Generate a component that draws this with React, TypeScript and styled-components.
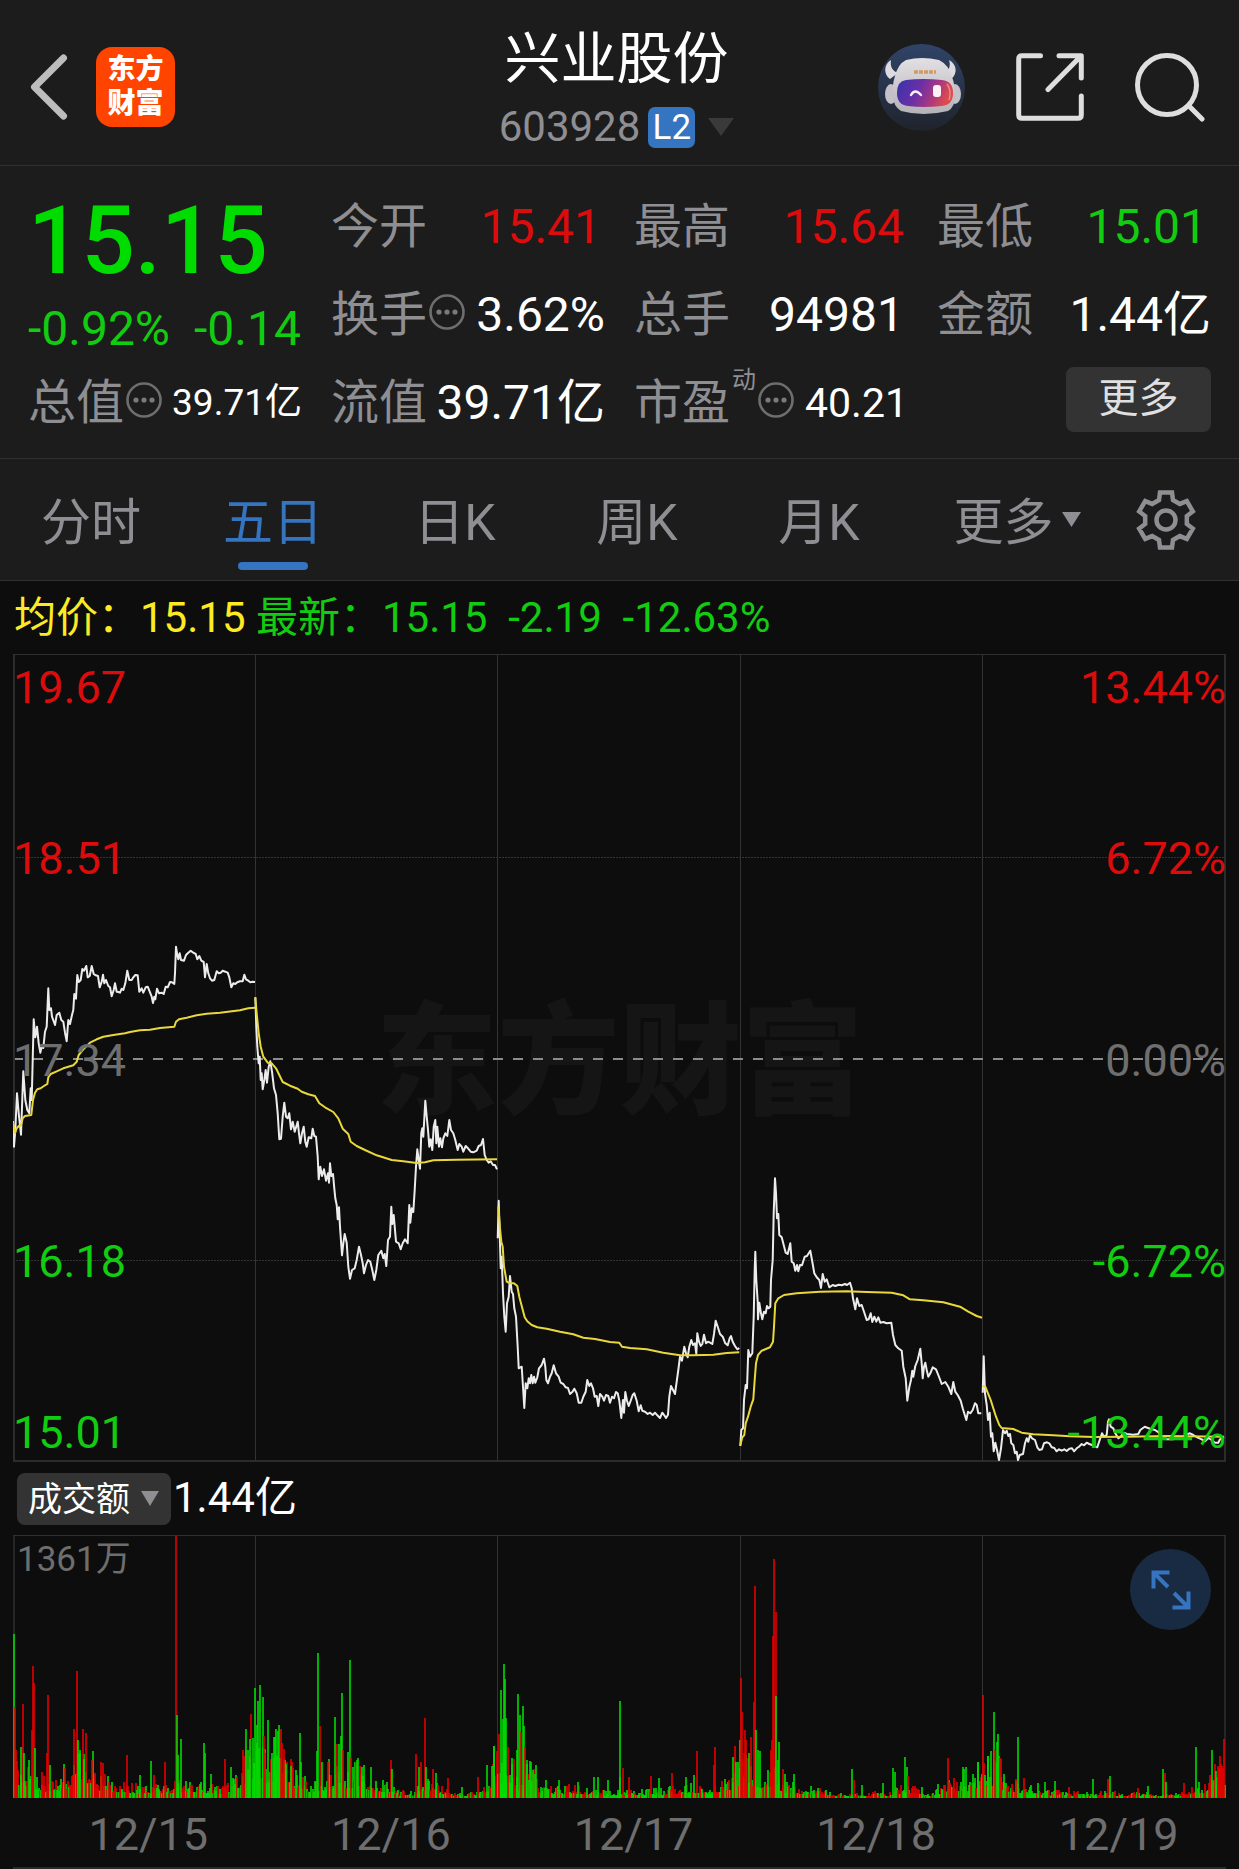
import React from "react";
import styled, { createGlobalStyle } from "styled-components";

const color = {
  page: "#0d0d0d",
  panel: "#1c1c1c",
  chip: "#333333",
  line: "#303030",
  label: "#8e8e93",
  dim: "#6e6e6e",
  text: "#ffffff",
  up: "#dc0c0c",
  down: "#12cc12",
  price: "#00dc00",
  average: "#fdea22",
  blue: "#3474c0",
  brand: "#ff4400",
};

type Tone = "up" | "down" | "text" | "average" | "dim";

const GlobalStyle = createGlobalStyle`
  * { box-sizing: border-box; }
  body {
    margin: 0;
    background: ${color.page};
    color: ${color.text};
    font-family: Roboto, "Noto Sans CJK SC", sans-serif;
  }
  button, select { font: inherit; color: inherit; border: 0; padding: 0; background: none; }
  dl, dd, dt, h1, p { margin: 0; font-weight: 400; }
  svg { display: block; }
`;

/* ---------- header ---------- */

const Header = styled.header`
  display: grid;
  grid-template-columns: 1fr auto 1fr;
  align-items: center;
  padding: 26px 34px 17px 28px;
  background: ${color.panel};
  border-bottom: 1px solid ${color.line};
`;

const HeaderSide = styled.div<{ $end?: boolean }>`
  display: flex;
  align-items: center;
  justify-content: ${(p) => (p.$end ? "flex-end" : "flex-start")};
  gap: ${(p) => (p.$end ? 51 : 28)}px;
`;

const IconButton = styled.button`
  flex: none;
  cursor: pointer;
`;

const Logo = styled.a`
  display: grid;
  place-content: center;
  width: 79px;
  height: 80px;
  border-radius: 16px;
  background: ${color.brand};
  color: #fff;
  font-size: 28px;
  font-weight: 900;
  line-height: 34px;
  text-align: center;
  text-decoration: none;
`;

const Title = styled.h1`
  font-size: 56px;
  line-height: 66px;
  text-align: center;
`;

const CodeRow = styled.div`
  display: flex;
  align-items: center;
  justify-content: center;
  gap: 8px;
  height: 42px;
  margin-top: 14px;
  font-size: 42px;
  line-height: 42px;
  color: ${color.label};
`;

const LevelBadge = styled.span`
  width: 47px;
  border-radius: 7px;
  background: ${color.blue};
  color: #fff;
  font-size: 35px;
  line-height: 41px;
  text-align: center;
`;

const CodeArrow = styled.button`
  && { padding: 0 0 0 5px; }
`;

/* ---------- quote ---------- */

const Quote = styled.section`
  display: grid;
  grid-template-columns: repeat(4, 1fr);
  grid-auto-rows: 88px;
  column-gap: 29px;
  padding: 17px 28px 11px;
  background: ${color.panel};
  border-bottom: 1px solid ${color.line};
`;

const PriceBlock = styled.div`
  grid-row: span 2;
  color: ${color.down};
  white-space: nowrap;
`;

const Price = styled.p`
  font-size: 94px;
  font-weight: 500;
  line-height: 116px;
  color: ${color.price};
`;

const Change = styled.p`
  display: flex;
  gap: 24px;
  font-size: 48px;
  line-height: 60px;
`;

const Stat = styled.dl`
  display: flex;
  align-items: center;
  gap: 2px;
  white-space: nowrap;
  line-height: 88px;
`;

const StatName = styled.dt`
  display: flex;
  align-items: center;
  gap: 2px;
  font-size: 48px;
  color: ${color.label};
`;

const StatSup = styled.sup`
  align-self: flex-start;
  font-size: 24px;
  line-height: 42px;
`;

const InfoButton = styled.button`
  margin-bottom: 6px;
`;

const StatValue = styled.dd<{ $tone: Tone; $size?: number; $inset?: boolean }>`
  && { margin-left: auto; }
  padding-right: ${(p) => (p.$inset ? 4 : 0)}px;
  font-size: ${(p) => p.$size ?? 48}px;
  color: ${(p) => color[p.$tone]};
`;

const MoreButton = styled.button`
  && {
    grid-column: 4;
    align-self: center;
    justify-self: end;
    width: 145px;
    margin-bottom: 8px;
    padding-bottom: 2px;
    border-radius: 8px;
    background: ${color.chip};
    color: #e0e0e0;
    font-size: 40px;
    line-height: 63px;
  }
`;

/* ---------- tabs ---------- */

const Tabs = styled.nav`
  display: grid;
  grid-template-columns: repeat(6, 182fr) 147fr;
  height: 122px;
  background: ${color.panel};
  border-bottom: 1px solid ${color.line};
`;

const Tab = styled.button<{ $active?: boolean; $menu?: boolean }>`
  && {
    display: flex;
    flex-direction: ${(p) => (p.$menu ? "row" : "column")};
    align-items: ${(p) => (p.$menu ? "flex-start" : "center")};
    justify-content: ${(p) => (p.$menu ? "center" : "flex-start")};
    gap: 8px;
    padding: ${(p) => (p.$menu ? "33px 0 0 32px" : "33px 0 0")};
    font-size: 50px;
    line-height: 62px;
    white-space: nowrap;
    color: ${(p) => (p.$active ? color.blue : color.label)};
  }
`;

const TabArrow = styled.span`
  margin-top: 20px;
`;

const Underline = styled.span`
  width: 70px;
  height: 8px;
  border-radius: 4px;
  background: ${color.blue};
`;

const GearButton = styled.button`
  display: grid;
  place-items: center;
`;

/* ---------- charts ---------- */

const Legend = styled.p`
  padding-left: 14px;
  font-size: 42px;
  line-height: 73px;
  white-space: pre;
`;

const Tinted = styled.span<{ $tone: Tone }>`
  color: ${(p) => color[p.$tone]};
`;

const ChartFrame = styled.div`
  position: relative;
  margin: 0 13px;
  border-top: 1px solid ${color.line};
`;

const Watermark = styled.div`
  position: absolute;
  inset: 0;
  display: grid;
  place-items: center;
  padding-bottom: 16px;
  font-size: 122px;
  font-weight: 900;
  color: #151515;
`;

const PriceSvg = styled.svg`
  position: relative;
  width: 100%;
  height: 807px;
`;

const VolumeSvg = styled.svg`
  width: 100%;
  height: 262px;
`;

const Scale = styled.div<{ $end?: boolean }>`
  position: absolute;
  inset: 0;
  display: grid;
  grid-template-rows: 1fr 2fr 2fr 2fr 1fr;
  align-items: center;
  font-size: 45px;
  line-height: 58px;
  text-align: ${(p) => (p.$end ? "right" : "left")};
`;

const ScaleText = styled.span<{ $tone: Tone; $edge?: "first" | "last" }>`
  align-self: ${(p) => (p.$edge === "first" ? "start" : p.$edge === "last" ? "end" : "center")};
  padding-top: 4px;
  color: ${(p) => color[p.$tone]};
`;

const VolumeBar = styled.div`
  display: flex;
  align-items: center;
  gap: 2px;
  height: 73px;
  padding-left: 17px;
  font-size: 42px;
  line-height: 72px;
`;

const VolumeValue = styled.span`
  height: 73px;
`;

const SelectWrap = styled.label`
  display: flex;
  align-items: center;
  width: 154px;
  height: 52px;
  padding-left: 11px;
  gap: 11px;
  border-radius: 8px;
  background: ${color.chip};
`;

const Select = styled.select`
  && {
    appearance: none;
    width: 102px;
    font-size: 34px;
    line-height: 52px;
    outline: none;
  }
`;

const VolumeMax = styled.span`
  position: absolute;
  top: 0;
  left: 4px;
  font-size: 35px;
  line-height: 48px;
  color: ${color.dim};
`;

const ExpandButton = styled.button`
  && {
    position: absolute;
    top: 13px;
    right: 15px;
    display: grid;
    place-items: center;
    width: 81px;
    height: 81px;
    border-radius: 50%;
    background: #182b42;
  }
`;

const Dates = styled.div`
  display: grid;
  grid-template-columns: repeat(5, 1fr);
  margin: 0 13px;
  border-bottom: 2px solid #2a2829;
  font-size: 45px;
  text-align: center;
  color: ${color.dim};
`;

const DateText = styled.time`
  padding: 5px 0 0 28px;
  line-height: 64px;
`;

/* ---------- series ----------
   Samples are integers, three units to a pixel, counted from the day's origin. */

type Day = { origin: [number, number]; price: string; average: string };

const DAYS: Day[] = [
  {
    origin: [-13, 245],
    price:
      "39,663 42,740 46,690 51,580 56,640 63,704 70,514 76,600 82,630 88,640 92,565 95,600 98,480 101,358 106,412 111,380 116,430 121,458 126,435 130,444 135,395 140,380 145,265 148,330 153,325 156,350 165,375 170,345 178,338 184,360 190,365 195,398 200,424 205,360 210,372 216,345 220,330 223,282 228,296 232,225 236,246 242,240 247,207 252,212 259,198 263,232 269,228 275,198 281,222 287,226 294,228 299,262 305,245 309,224 313,250 318,240 325,258 330,262 335,289 341,270 345,250 350,275 355,276 360,278 365,266 370,270 376,250 382,212 388,240 395,240 400,232 406,225 413,226 418,275 425,265 430,278 437,262 443,260 449,275 455,290 459,309 463,290 466,298 471,266 477,280 485,278 491,282 497,260 503,262 510,246 516,247 523,252 525,220 528,140 531,160 535,178 539,160 543,180 552,182 558,165 565,158 572,152 580,158 587,162 592,178 598,168 604,182 611,186 615,232 620,192 625,220 630,235 636,242 643,240 650,214 656,220 662,218 668,212 676,215 683,218 688,232 694,262 700,250 706,252 712,247 720,244 728,244 733,224 738,238 745,242 751,247 758,245 765,246",
    average:
      "39,668 45,700 50,685 56,678 63,676 68,655 75,648 94,645 99,600 105,578 112,568 122,565 135,556 142,552 145,532 152,522 170,514 190,505 220,496 230,485 236,465 250,448 270,428 290,418 310,410 340,405 375,400 390,396 420,391 450,389 480,384 523,380 528,365 537,358 560,353 590,346 620,341 660,338 720,331 745,325 765,323",
  },
  {
    origin: [-13, 245],
    price:
      "766,292 769,380 772,440 776,490 779,470 782,540 785,520 788,568 793,540 797,510 801,548 806,500 811,484 816,515 822,565 828,585 833,640 838,718 843,716 848,650 853,608 858,650 863,655 868,640 873,688 878,665 884,695 893,665 897,700 901,730 906,700 911,680 916,725 920,740 926,712 934,715 938,686 943,708 948,710 953,770 956,838 961,800 966,828 972,808 978,842 984,820 987,848 990,790 994,828 999,822 1003,865 1006,895 1010,915 1013,958 1017,922 1020,980 1026,1066 1030,1030 1034,1002 1040,1028 1045,1100 1050,1136 1056,1110 1064,1105 1070,1080 1077,1040 1083,1065 1088,1090 1092,1120 1098,1095 1104,1080 1111,1085 1117,1110 1123,1140 1129,1110 1135,1065 1144,1052 1150,1075 1154,1062 1159,1098 1164,1020 1170,1010 1174,920 1177,972 1181,945 1185,990 1188,1025 1196,1030 1202,1048 1208,1030 1215,1018 1223,1030 1228,915 1231,968 1235,925 1240,936 1244,870 1248,800 1252,748 1256,780 1260,806 1264,700 1267,685 1270,710 1276,602 1280,650 1284,690 1288,740 1292,718 1297,750 1301,680 1306,660 1309,730 1312,680 1317,740 1321,715 1326,742 1330,715 1336,700 1342,708 1348,660 1353,690 1360,700 1366,720 1373,750 1378,732 1385,740 1390,755 1397,738 1404,745 1412,755 1420,757 1430,752 1436,738 1443,735 1449,717 1454,765 1460,780 1466,788 1472,784 1479,795 1485,795 1491,808",
    average:
      "766,292 770,340 776,400 782,440 790,470 803,488 815,490 828,505 838,525 848,546 870,557 893,566 905,575 925,583 945,588 958,610 975,622 1000,636 1015,655 1028,686 1045,702 1052,725 1070,738 1095,750 1130,766 1175,780 1210,784 1250,789 1275,787 1300,781 1370,779 1491,778",
  },
  {
    origin: [467, 325],
    price:
      "53,775 56,662 59,760 62,865 65,830 69,940 73,1010 77,1055 81,970 86,950 90,888 95,935 99,942 103,985 108,1010 113,1100 116,1165 125,1160 129,1220 133,1284 137,1210 142,1225 146,1195 150,1210 154,1185 158,1210 162,1190 166,1208 172,1192 177,1165 185,1155 192,1136 196,1160 199,1200 204,1210 210,1190 215,1180 221,1156 228,1180 236,1190 242,1208 250,1212 257,1222 264,1224 270,1242 277,1236 283,1226 290,1240 296,1268 304,1268 310,1250 317,1235 322,1200 328,1218 333,1210 339,1225 344,1250 350,1248 355,1278 360,1242 367,1250 372,1262 378,1245 385,1248 390,1268 396,1250 402,1255 408,1236 413,1240 418,1262 424,1314 429,1260 432,1298 436,1236 441,1262 446,1278 452,1262 458,1245 463,1240 470,1262 476,1294 482,1276 487,1292 495,1295 503,1302 510,1298 518,1305 525,1298 532,1306 540,1314 547,1298 553,1306 558,1314 564,1304 568,1250 573,1218 579,1230 585,1242 590,1205 595,1170 600,1130 606,1142 613,1100 618,1120 623,1132 628,1100 634,1080 639,1095 645,1090 649,1122 652,1060 657,1085 662,1098 667,1092 672,1064 678,1090 684,1085 690,1088 697,1092 702,1062 707,1022 713,1040 720,1062 728,1070 736,1090 743,1096 749,1075 753,1068 758,1085 765,1098 772,1108 778,1104",
    average:
      "55,680 60,745 64,785 68,800 72,860 80,905 90,910 102,910 112,918 118,950 127,985 134,1012 142,1024 155,1035 172,1042 200,1046 240,1055 280,1063 310,1073 345,1077 390,1086 418,1088 426,1100 450,1104 500,1108 550,1118 600,1126 640,1126 700,1124 740,1119 778,1117",
  },
  {
    origin: [467, 325],
    price:
      "781,1398 784,1350 789,1345 792,1260 797,1215 801,1225 805,1110 810,1130 817,1120 821,1010 824,870 826,815 829,900 833,965 834,1018 838,968 843,1000 847,1018 852,995 857,1000 861,978 866,985 871,980 873,900 878,840 881,700 885,595 888,640 891,715 895,702 898,765 905,772 911,795 917,818 923,822 931,790 935,845 941,850 946,872 951,855 955,874 960,855 966,856 974,830 981,828 991,812 997,845 1003,880 1010,892 1018,900 1023,924 1028,882 1034,905 1040,898 1048,922 1058,915 1066,918 1076,914 1085,916 1095,912 1101,915 1110,908 1115,925 1119,955 1126,988 1131,955 1138,978 1145,975 1152,995 1160,1020 1166,1018 1172,1000 1177,1026 1183,1010 1189,1025 1195,1012 1201,1028 1210,1026 1220,1030 1234,1028 1239,1065 1246,1095 1255,1105 1265,1112 1270,1160 1277,1195 1282,1262 1288,1222 1293,1200 1297,1172 1300,1190 1306,1158 1313,1140 1321,1106 1325,1150 1328,1195 1332,1160 1336,1148 1340,1170 1345,1190 1351,1180 1358,1162 1368,1168 1376,1188 1385,1212 1396,1206 1405,1220 1414,1242 1420,1206 1426,1235 1433,1245 1442,1262 1448,1285 1459,1320 1464,1295 1471,1300 1478,1290 1485,1270 1490,1275 1495,1300 1504,1300",
    average:
      "781,1396 787,1372 793,1365 797,1330 804,1310 812,1280 820,1258 824,1200 828,1150 834,1125 845,1112 870,1102 879,1085 882,1040 886,970 895,955 912,945 950,940 1020,935 1100,934 1160,936 1235,938 1270,946 1290,958 1330,961 1390,967 1440,980 1465,995 1490,1008 1506,1013",
  },
  {
    origin: [947, 625],
    price:
      "68,338 71,229 75,340 80,375 84,420 89,398 93,470 97,460 101,514 106,488 111,510 117,540 123,505 129,450 135,460 140,452 145,468 150,462 154,490 160,495 165,520 170,515 174,540 179,525 189,522 195,490 200,475 205,485 210,465 216,475 225,480 232,502 238,510 246,508 252,490 261,487 268,490 275,502 283,504 290,514 297,508 305,512 313,508 320,513 328,506 336,505 342,514 350,505 357,500 365,492 372,496 380,488 388,492 396,495 405,500 412,502 419,480 426,460 432,470 440,465 444,425 447,418 452,440 460,445 466,460 475,475 482,470 492,458 500,462 520,464 535,462 541,450 554,440 570,446 585,450 597,458 605,475 620,478 640,478 655,470 665,475 675,465 690,460 700,465 712,472 725,478 735,484 745,474 755,480 765,488 775,488 780,478 792,470",
    average:
      "68,318 76,320 84,340 92,360 100,385 108,410 118,435 125,444 160,447 185,458 220,463 280,466 330,469 400,471 500,470 620,468 792,470",
  },
];

const toPath = (points: string, [ox, oy]: [number, number]) =>
  "M" +
  points
    .split(" ")
    .map((pair) => {
      const [x, y] = pair.split(",").map(Number);
      return `${(x / 3 + ox).toFixed(1)} ${(y / 3 + oy).toFixed(1)}`;
    })
    .join("L");

/* Standout turnover bars: colour, then x and top in thirds of a pixel. */
const PEAKS: { x: number; base: number; bars: string }[] = [
  {
    x: -13,
    base: 1014,
    bars:
      "g42,521 r45,740 r48,870 r69,733 g72,880 r96,810 r99,618 r103,670 g106,865 r145,705 r142,880 g149,915 g64,862 g87,900 r126,935 g193,913 r196,925 r223,806 r232,633 g235,840 g241,870 r250,807 r259,818 g253,898 g280,873 r275,900 r302,905 r308,908 r382,886 g452,902 g419,944 r463,945 r495,907 r528,226 g531,766 g543,837 g534,886 g613,849 g616,880 g633,943 r676,898 g693,922 g739,806 r754,762 g764,683 g781,674 g775,722 g788,712 r791,828 g803,781 r730,870 g745,870 g749,838 g770,795 g778,865 r796,880 g821,832 g824,830 g827,808 g833,812 g838,794 r842,808 r846,848 r851,866 g815,880 g857,912 g872,918 g899,818 g902,906 r878,925 g953,579 r960,797 g950,873 g966,907 g987,898 r984,905 g1005,770 g1025,699 g1050,600 r1029,870 r1011,852 g1017,852 g1022,828 g1044,877 r1053,890 g1092,915 g1086,920 g1114,920 r1174,899 g1176,928 r1249,883 r1264,907 r1276,773 g1279,920 g1256,920 r1300,928 g1308,940 r1345,955 g1387,980 r1433,950 g1460,916 g1475,918 g1481,858",
  },
  {
    x: 477,
    base: 834,
    bars:
      "g11,678 r26,643 g32,511 g38,597 g41,433 g45,478 g48,595 r54,680 g66,715 r72,718 g80,690 g84,522 g90,586 r93,635 g99,559 g102,618 r105,680 g111,720 g120,724 g129,750 g138,736 g168,780 g207,780 g265,785 g313,771 g325,771 g355,780 g389,770 g391,544 r398,744 r418,771 r482,767 g508,775 r545,760 g588,771 r621,693 g612,766 r672,735 r675,680 r735,677 g729,710 g739,727 g750,660 r753,475 r757,577 r762,700 r766,629 r768,660 g777,698 r784,652 r792,545 r796,199 g799,629 g805,690 g811,693 r843,690 r847,660 r850,347 r853,118 r857,277 g859,529 g864,720 g868,667 r878,748 g886,762 g913,762 g1086,748 r1091,780 g1115,796 g1179,790 g1210,745 g1215,755 g1245,710 g1251,742 r1255,768 g1297,800 g1345,792 r1375,713 g1418,742 g1423,748 g1429,740 g1463,727 r1480,524 g1493,708",
  },
  {
    x: 887,
    base: 834,
    bars:
      "g263,708 g272,692 g281,577 r284,690 g290,665 g293,643 r300,713 r304,716 g233,727 g311,763 r348,778 g353,652 r372,774 g415,790 g435,786 g465,782 r507,800 g579,778 r623,778 g630,769 r714,803 g743,797 g788,748 r794,760 g797,785 r851,790 g887,682 g897,787 r929,766 g935,690 r945,733 g949,752 r953,738 r957,745 r960,709 r964,732 r968,745 r972,658",
  },
];

/* Ceiling of the ordinary bars along the five days: x, height in pixels. */
const ENVELOPE: [number, number][] = [
  [0, 50], [12, 35], [20, 24], [32, 20], [44, 20], [54, 28], [60, 55], [70, 55], [74, 28], [88, 24],
  [102, 20], [115, 18], [127, 12], [155, 16], [172, 20], [197, 14], [215, 14], [228, 38], [240, 60],
  [255, 48], [265, 55], [275, 45], [285, 24], [300, 16], [310, 18], [320, 34], [335, 26], [345, 40],
  [355, 22], [372, 18], [386, 8], [400, 6], [410, 22], [422, 24], [430, 10], [445, 5], [468, 8],
  [476, 22], [482, 45], [495, 50], [505, 24], [515, 45], [525, 18], [534, 11], [560, 14], [580, 8],
  [600, 8], [640, 10], [665, 13], [685, 16], [700, 12], [715, 22], [725, 40], [735, 45], [745, 25],
  [757, 40], [768, 18], [778, 16], [790, 10], [805, 14], [820, 5], [840, 5], [860, 8], [875, 6],
  [890, 16], [900, 14], [910, 4], [925, 10], [940, 24], [955, 20], [965, 36], [985, 42], [992, 16],
  [1005, 16], [1020, 12], [1035, 8], [1060, 8], [1085, 6], [1095, 10], [1110, 4], [1130, 8],
  [1145, 3], [1170, 6], [1182, 14], [1195, 16], [1203, 32], [1213, 30],
];

type Bar = { x: number; h: number; up: boolean };

const buildBars = (): Bar[] => {
  let seed = 1215;
  const random = () => {
    seed = (seed * 16807) % 2147483647;
    return seed / 2147483647;
  };
  const bars: Bar[] = [];
  let slot = 0;
  let up = true;
  for (let x = 0; x < 1212; x += 1) {
    while (slot < ENVELOPE.length - 2 && ENVELOPE[slot + 1][0] <= x) slot += 1;
    const [x0, h0] = ENVELOPE[slot];
    const [x1, h1] = ENVELOPE[slot + 1];
    const ceiling = h0 + ((h1 - h0) * (x - x0)) / (x1 - x0);
    if (random() > 0.5) up = !up;
    const share = random();
    bars.push({ x, h: Math.max(2, Math.round(ceiling * (0.3 + 0.75 * share * share))), up });
  }
  for (const group of PEAKS) {
    for (const item of group.bars.split(" ")) {
      const [px, top] = item.slice(1).split(",").map(Number);
      bars.push({
        x: Math.round(px / 3 + group.x) - 1,
        h: Math.round((group.base - top) / 3),
        up: item[0] === "r",
      });
    }
  }
  return bars;
};

const BARS = buildBars();
const DIVIDERS = [243, 485, 728, 970];

/* ---------- drawings ---------- */

const Triangle = ({ w, h, fill }: { w: number; h: number; fill: string }) => (
  <svg width={w} height={h} viewBox="0 0 20 16" preserveAspectRatio="none" aria-hidden>
    <path d="M0 0H20L10 16Z" fill={fill} />
  </svg>
);

const DotsIcon = () => (
  <svg width="36" height="36" viewBox="0 0 36 36" aria-hidden>
    <circle cx="18" cy="18" r="16.5" fill="none" stroke={color.dim} strokeWidth="2.6" />
    {[10, 18, 26].map((x) => (
      <circle key={x} cx={x} cy="18" r="2.6" fill="#7a7a7c" />
    ))}
  </svg>
);

const GearIcon = () => {
  const tooth: [number, number][] = [[-7, -20], [-6, -27.5], [6, -27.5], [7, -20]];
  const points = [0, 60, 120, 180, 240, 300].flatMap((deg) => {
    const a = (deg * Math.PI) / 180;
    return tooth.map(
      ([x, y]) =>
        `${(x * Math.cos(a) - y * Math.sin(a)).toFixed(2)},${(x * Math.sin(a) + y * Math.cos(a)).toFixed(2)}`
    );
  });
  return (
    <svg width="60" height="60" viewBox="-30 -30 60 60" fill="none" stroke={color.label} strokeWidth="4.5" aria-hidden>
      <polygon points={points.join(" ")} />
      <circle r="9.5" />
    </svg>
  );
};

const RobotIcon = () => (
  <svg width="87" height="87" viewBox="0 0 87 87" aria-hidden>
    <defs>
      <linearGradient id="sky" x1="0" y1="0" x2="0" y2="1">
        <stop offset="0" stopColor="#304468" />
        <stop offset="1" stopColor="#1f232c" />
      </linearGradient>
      <linearGradient id="shell" x1="0" y1="0" x2="0" y2="1">
        <stop offset="0" stopColor="#e2e0e3" />
        <stop offset="1" stopColor="#b4b2b8" />
      </linearGradient>
      <linearGradient id="visor" x1="0" y1="0" x2="1" y2="0.25">
        <stop offset="0" stopColor="#3534ac" />
        <stop offset="0.45" stopColor="#6b2fa6" />
        <stop offset="0.75" stopColor="#a8387f" />
        <stop offset="1" stopColor="#dd4a4e" />
      </linearGradient>
    </defs>
    <circle cx="43.5" cy="43.5" r="43.5" fill="url(#sky)" />
    <path d="M13 16C6 20 5 30 12 35L20 29C14 27 12 22 13 16ZM71 16C79 20 80 30 73 35L66 29C71 27 73 22 71 16Z" fill="#dddbe0" />
    <ellipse cx="13" cy="50" rx="6" ry="10" fill="#c4c2c8" />
    <ellipse cx="77" cy="50" rx="6" ry="10" fill="#c4c2c8" />
    <path d="M28 16Q44 12 61 16Q71 21 74 33Q77 40 77 52Q77 63 70 67Q45 73 23 67Q15 62 15 51Q14 41 17 32Q20 20 28 16Z" fill="url(#shell)" />
    <path d="M28 36Q45 34 64 36Q75 37 75 49Q75 61 64 62Q45 64 30 62Q19 61 19 49Q19 37 28 36Z" fill="url(#visor)" />
    <path d="M36 28H58" stroke="#d39a62" strokeWidth="3.5" strokeDasharray="4 1" />
    <path d="M33 51Q37 44 43 51" fill="none" stroke="#f3eefc" strokeWidth="2.4" strokeLinecap="round" />
    <rect x="55" y="41" width="8" height="12" rx="3" fill="#fbf1f6" />
    <path d="M69 40Q74 47 71 56" fill="none" stroke="#e98b92" strokeWidth="1.5" />
  </svg>
);

/* ---------- data ---------- */

type StatData = {
  name: string;
  value: string;
  tone: Tone;
  size?: number;
  sup?: string;
  info?: boolean;
  inset?: boolean;
};

const STATS: StatData[] = [
  { name: "今开", value: "15.41", tone: "up", inset: true },
  { name: "最高", value: "15.64", tone: "up", inset: true },
  { name: "最低", value: "15.01", tone: "down", inset: true },
  { name: "换手", value: "3.62%", tone: "text", info: true },
  { name: "总手", value: "94981", tone: "text", inset: true },
  { name: "金额", value: "1.44亿", tone: "text" },
  { name: "总值", value: "39.71亿", tone: "text", size: 37, info: true },
  { name: "流值", value: "39.71亿", tone: "text" },
  { name: "市盈", value: "40.21", tone: "text", size: 41, sup: "动", info: true },
];

const LEVELS: { price: string; pct: string; tone: Tone; edge?: "first" | "last" }[] = [
  { price: "19.67", pct: "13.44%", tone: "up", edge: "first" },
  { price: "18.51", pct: "6.72%", tone: "up" },
  { price: "17.34", pct: "0.00%", tone: "dim" },
  { price: "16.18", pct: "-6.72%", tone: "down" },
  { price: "15.01", pct: "-13.44%", tone: "down", edge: "last" },
];

export default function App() {
  return (
    <>
      <GlobalStyle />
      <Header>
        <HeaderSide>
          <IconButton aria-label="返回">
            <svg width="40" height="66" viewBox="0 0 40 66" fill="none" stroke="#bdbdbd" strokeWidth="7" strokeLinecap="round" strokeLinejoin="round">
              <path d="M35.5 4L6.5 33L35.5 62" />
            </svg>
          </IconButton>
          <Logo href="#">
            <span>东方</span>
            <span>财富</span>
          </Logo>
        </HeaderSide>
        <div>
          <Title>兴业股份</Title>
          <CodeRow>
            603928
            <LevelBadge>L2</LevelBadge>
            <CodeArrow aria-label="切换股票">
              <Triangle w={26} h={18} fill="#3a3a3a" />
            </CodeArrow>
          </CodeRow>
        </div>
        <HeaderSide $end>
          <IconButton aria-label="智能助手">
            <RobotIcon />
          </IconButton>
          <IconButton aria-label="分享">
            <svg width="68" height="68" viewBox="0 0 68 68" fill="none" stroke="#dedede" strokeWidth="5" strokeLinecap="round" strokeLinejoin="round">
              <path d="M24.5 2.7H6Q2.7 2.7 2.7 6V62Q2.7 65.3 6 65.3H62Q65.3 65.3 65.3 62V43" />
              <path d="M43 2.7H65.3V25M65 3L32 36.5" />
            </svg>
          </IconButton>
          <IconButton aria-label="搜索">
            <svg width="70" height="70" viewBox="0 0 70 70" fill="none" stroke="#dedede" strokeWidth="5" strokeLinecap="round">
              <circle cx="32" cy="33" r="29.5" />
              <path d="M54 54L67 67" />
            </svg>
          </IconButton>
        </HeaderSide>
      </Header>

      <Quote>
        <PriceBlock>
          <Price>15.15</Price>
          <Change>
            <span>-0.92%</span>
            <span>-0.14</span>
          </Change>
        </PriceBlock>
        {STATS.map((s) => (
          <Stat key={s.name}>
            <StatName>
              {s.name}
              {s.sup && <StatSup>{s.sup}</StatSup>}
              {s.info && (
                <InfoButton aria-label={`${s.name}说明`}>
                  <DotsIcon />
                </InfoButton>
              )}
            </StatName>
            <StatValue $tone={s.tone} $size={s.size} $inset={s.inset}>
              {s.value}
            </StatValue>
          </Stat>
        ))}
        <MoreButton>更多</MoreButton>
      </Quote>

      <Tabs>
        <Tab>分时</Tab>
        <Tab $active>
          五日
          <Underline />
        </Tab>
        <Tab>日K</Tab>
        <Tab>周K</Tab>
        <Tab>月K</Tab>
        <Tab $menu>
          更多
          <TabArrow>
            <Triangle w={19} h={15} fill={color.label} />
          </TabArrow>
        </Tab>
        <GearButton aria-label="设置">
          <GearIcon />
        </GearButton>
      </Tabs>

      <Legend>
        <Tinted $tone="average">均价：15.15 </Tinted>
        <Tinted $tone="down">最新：15.15  -2.19  -12.63%</Tinted>
      </Legend>

      <ChartFrame>
        <Watermark aria-hidden>东方财富</Watermark>
        <PriceSvg viewBox="0 0 1213 807" preserveAspectRatio="none" role="img" aria-label="五日走势">
          {DIVIDERS.map((x) => (
            <path key={x} d={`M${x - 0.5} 0V807`} stroke="#333" />
          ))}
          <path d="M0 202.5H1213M0 605.5H1213" stroke="#333" strokeDasharray="2 1" />
          <path d="M0 404H1213" stroke="#8c8c8c" strokeWidth="2" strokeDasharray="10 10" />
          <path d="M1 0V806H1212V0" fill="none" stroke="#2c2c2c" strokeWidth="2" />
          {DAYS.map((day, i) => (
            <g key={i} fill="none" strokeWidth="2" strokeLinejoin="round">
              <path d={toPath(day.price, day.origin)} stroke="#ececec" />
              <path d={toPath(day.average, day.origin)} stroke="#e8d83c" />
            </g>
          ))}
        </PriceSvg>
        <Scale>
          {LEVELS.map((l) => (
            <ScaleText key={l.price} $tone={l.tone} $edge={l.edge}>
              {l.price}
            </ScaleText>
          ))}
        </Scale>
        <Scale $end>
          {LEVELS.map((l) => (
            <ScaleText key={l.pct} $tone={l.tone} $edge={l.edge}>
              {l.pct}
            </ScaleText>
          ))}
        </Scale>
      </ChartFrame>

      <VolumeBar>
        <SelectWrap>
          <Select aria-label="指标" defaultValue="成交额">
            <option>成交额</option>
          </Select>
          <Triangle w={18} h={15} fill={color.label} />
        </SelectWrap>
        <VolumeValue>1.44亿</VolumeValue>
      </VolumeBar>

      <ChartFrame>
        <VolumeSvg viewBox="0 0 1213 262" preserveAspectRatio="none" role="img" aria-label="成交额">
          {DIVIDERS.map((x) => (
            <path key={x} d={`M${x - 0.5} 0V262`} stroke="#333" />
          ))}
          <path d="M1 0V262M1212 0V262" stroke="#262626" strokeWidth="2" />
          {BARS.map((b, i) => (
            <rect key={i} x={b.x} y={262 - b.h} width="2" height={b.h} fill={b.up ? "#e60000" : "#00dc00"} opacity="0.8" />
          ))}
        </VolumeSvg>
        <VolumeMax>1361万</VolumeMax>
        <ExpandButton aria-label="全屏">
          <svg width="40" height="40" viewBox="0 0 40 40" fill="none" stroke={color.blue} strokeWidth="4">
            <path d="M2.5 18.5V2.5H18.5M3 3L17 17" />
            <path d="M37.5 21.5V37.5H21.5M37 37L23 23" />
          </svg>
        </ExpandButton>
      </ChartFrame>

      <Dates>
        {["12/15", "12/16", "12/17", "12/18", "12/19"].map((d) => (
          <DateText key={d}>{d}</DateText>
        ))}
      </Dates>
    </>
  );
}
